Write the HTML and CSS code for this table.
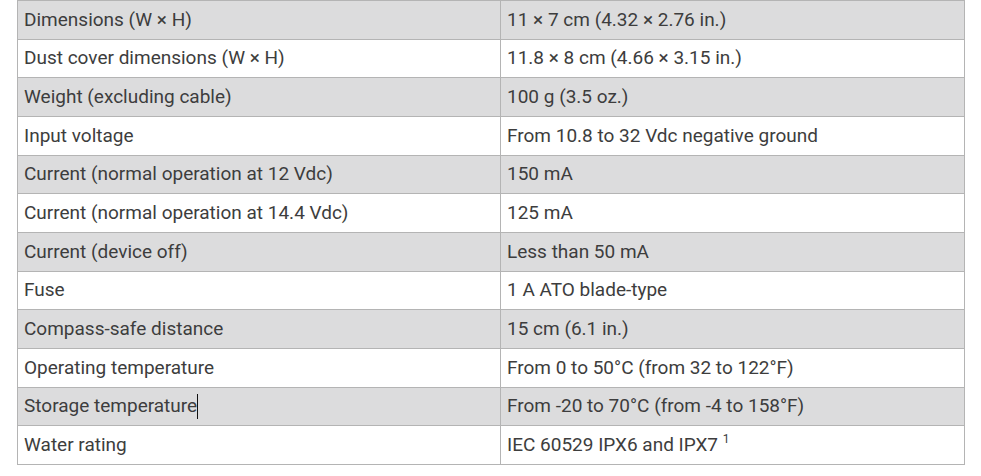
FILE: index.html
```html
<!DOCTYPE html>
<html>
<head>
<meta charset="utf-8">
<link rel="stylesheet" href="styles.css">
</head>
<body>
<table class="specs">
<tbody>
<tr class="alt"><td class="k">Dimensions (W × H)</td><td class="v">11 × 7 cm (4.32 × 2.76 in.)</td></tr>
<tr><td class="k">Dust cover dimensions (W × H)</td><td class="v">11.8 × 8 cm (4.66 × 3.15 in.)</td></tr>
<tr class="alt"><td class="k">Weight (excluding cable)</td><td class="v">100 g (3.5 oz.)</td></tr>
<tr><td class="k">Input voltage</td><td class="v">From 10.8 to 32 Vdc negative ground</td></tr>
<tr class="alt"><td class="k">Current (normal operation at 12 Vdc)</td><td class="v">150 mA</td></tr>
<tr><td class="k">Current (normal operation at 14.4 Vdc)</td><td class="v">125 mA</td></tr>
<tr class="alt"><td class="k">Current (device off)</td><td class="v">Less than 50 mA</td></tr>
<tr><td class="k">Fuse</td><td class="v">1 A ATO blade-type</td></tr>
<tr class="alt"><td class="k">Compass-safe distance</td><td class="v">15 cm (6.1 in.)</td></tr>
<tr><td class="k">Operating temperature</td><td class="v">From 0 to 50°C (from 32 to 122°F)</td></tr>
<tr class="alt"><td class="k">Storage temperature<span class="caret"></span></td><td class="v">From -20 to 70°C (from -4 to 158°F)</td></tr>
<tr><td class="k">Water rating</td><td class="v">IEC 60529 IPX6 and IPX7 <sup>1</sup></td></tr>
</tbody>
</table>
</body>
</html>
```

FILE: styles.css
```css
html, body {
  margin: 0;
  padding: 0;
  background: #ffffff;
}
body {
  font-family: Roboto, "Liberation Sans", sans-serif;
  color: #3d3d3d;
}
.specs {
  border-collapse: collapse;
  margin-left: 17px;
  width: 948px;
  font-size: 19px;
  table-layout: fixed;
}
.specs td {
  border: 1px solid #b4b4b4;
  height: 38.67px;
  box-sizing: border-box;
  padding: 0 6px;
  vertical-align: middle;
  line-height: 22px;
}
.specs td.k {
  width: 483px;
}
.specs tr.alt td {
  background: #dcdcdd;
}
.caret {
  display: inline-block;
  width: 1px;
  height: 25px;
  background: #111;
  vertical-align: -7px;
}
sup {
  font-size: 12px;
  vertical-align: 8px;
  line-height: 0;
}
```
